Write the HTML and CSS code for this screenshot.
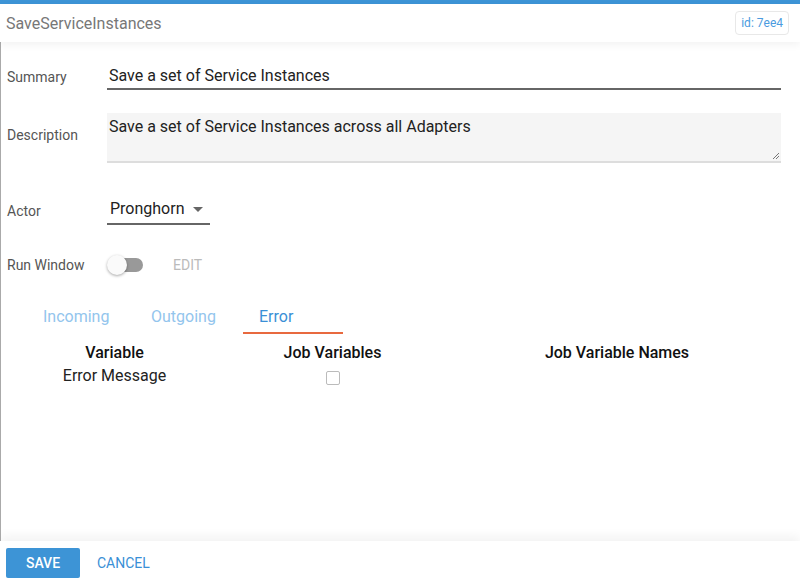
FILE: index.html
```html
<!DOCTYPE html>
<html>
<head>
<meta charset="utf-8">
<link rel="stylesheet" href="styles.css">
</head>
<body>
<div class="page">
  <div class="topbar"></div>
  <header class="header">
    <div class="title">SaveServiceInstances</div>
    <div class="badge">id: 7ee4</div>
  </header>
  <main class="content">
    <div class="row row-summary">
      <label class="label">Summary</label>
      <div class="input">Save a set of Service Instances</div>
    </div>
    <div class="row row-desc">
      <label class="label">Description</label>
      <div class="textarea">Save a set of Service Instances across all Adapters
        <svg class="grip" width="8" height="8" viewBox="0 0 8 8"><path d="M7 1 L1 7 M7 4 L4 7" stroke="#777" stroke-width="1" fill="none"/></svg>
      </div>
    </div>
    <div class="row row-actor">
      <label class="label">Actor</label>
      <div class="select"><span>Pronghorn</span><span class="caret"></span></div>
    </div>
    <div class="row row-run">
      <label class="label">Run Window</label>
      <div class="run-controls">
        <div class="toggle"><div class="track"></div><div class="knob"></div></div>
        <span class="edit">EDIT</span>
      </div>
    </div>
    <nav class="tabs">
      <div class="tab">Incoming</div>
      <div class="tab">Outgoing</div>
      <div class="tab active">Error</div>
    </nav>
    <div class="table">
      <div class="th">Variable</div>
      <div class="th">Job Variables</div>
      <div class="th">Job Variable Names</div>
      <div class="td">Error Message</div>
      <div class="td"><span class="checkbox"></span></div>
      <div class="td"></div>
    </div>
  </main>
  <footer class="footer">
    <button class="btn-save">SAVE</button>
    <button class="btn-cancel">CANCEL</button>
  </footer>
</div>
</body>
</html>
```

FILE: styles.css
```css
* { box-sizing: border-box; }
html, body { margin: 0; padding: 0; }
body {
  font-family: Roboto, "Liberation Sans", Arial, sans-serif;
  background: #fff;
  color: #222;
  width: 800px;
  height: 584px;
  overflow: hidden;
}
.page {
  display: flex;
  flex-direction: column;
  height: 584px;
}
.topbar {
  height: 4px;
  background: #3d94d6;
  flex: none;
}
.header {
  height: 38px;
  flex: none;
  display: flex;
  align-items: center;
  justify-content: space-between;
  padding: 0 11px 0 6px;
  position: relative;
  z-index: 2;
  background: #fff;
  box-shadow: 0 3px 8px rgba(0,0,0,0.05);
}
.title {
  font-size: 16px;
  color: #777;
}
.badge {
  font-size: 12px;
  color: #4b9be0;
  border: 1px solid #e8e8e8;
  border-radius: 4px;
  height: 24px;
  line-height: 22px;
  padding: 0 5px;
}
.content {
  flex: 1;
  border-left: 1px solid #aaa;
  padding: 21px 19px 0 6px;
  position: relative;
  z-index: 1;
}
.row {
  display: grid;
  grid-template-columns: 100px 1fr;
  align-items: center;
}
.label {
  font-size: 14px;
  color: #555;
}
.input {
  font-size: 16px;
  color: #222;
  height: 27px;
  line-height: 25px;
  padding-left: 2px;
  border-bottom: 2px solid #666;
}
.row-desc { margin-top: 23px; }
.row-desc .label {
  align-self: start;
  margin-top: 14px;
}
.textarea {
  position: relative;
  height: 50px;
  background: #f5f5f5;
  border-bottom: 2px solid #ddd;
  font-size: 16px;
  color: #222;
  padding: 4px 2px;
  line-height: 20px;
}
.grip {
  position: absolute;
  right: 1px;
  bottom: 1px;
}
.row-actor { margin-top: 33px; }
.select {
  justify-self: start;
  display: flex;
  align-items: center;
  width: 103px;
  height: 29px;
  font-size: 16px;
  color: #222;
  padding-left: 3px;
  border-bottom: 2px solid #666;
  padding-bottom: 3px;
}
.caret {
  width: 0;
  height: 0;
  border-left: 5px solid transparent;
  border-right: 5px solid transparent;
  border-top: 5px solid #666;
  margin-left: 8px;
  margin-top: 2px;
}
.row-run { margin-top: 30px; }
.run-controls {
  display: flex;
  align-items: center;
}
.toggle {
  position: relative;
  width: 36px;
  height: 20px;
}
.track {
  position: absolute;
  left: 2px;
  top: 3px;
  width: 34px;
  height: 14px;
  border-radius: 7px;
  background: #999;
}
.knob {
  position: absolute;
  left: 0;
  top: 0;
  width: 20px;
  height: 20px;
  border-radius: 50%;
  background: #fafafa;
  box-shadow: 0 1px 3px rgba(0,0,0,0.35);
}
.edit {
  margin-left: 30px;
  font-size: 14px;
  color: #bbb;
}
.tabs {
  display: flex;
  gap: 8px;
  margin-top: 29px;
  margin-left: 20px;
}
.tab {
  width: 100px;
  height: 30px;
  padding-left: 16px;
  font-size: 16px;
  line-height: 20px;
  color: #93c5ed;
  padding-top: 3px;
}
.tab.active {
  color: #3a8fd6;
  border-bottom: 2px solid #e8693f;
}
.table {
  display: grid;
  grid-template-columns: 217px 219px 350px;
  margin-top: 9px;
  margin-left: -1px;
}
.th {
  text-align: center;
  font-size: 16px;
  font-weight: 500;
  color: #111;
  height: 23px;
  line-height: 20px;
}
.td {
  text-align: center;
  font-size: 16px;
  color: #222;
  height: 24px;
  line-height: 20px;
}
.checkbox {
  display: inline-block;
  width: 14px;
  height: 14px;
  border: 1px solid #bbb;
  border-radius: 2px;
  vertical-align: middle;
  margin-top: 2px;
}
.footer {
  height: 43px;
  flex: none;
  display: flex;
  align-items: center;
  padding: 0 6px;
  background: #fff;
  position: relative;
  z-index: 2;
  box-shadow: 0 -5px 10px rgba(0,0,0,0.05);
}
.btn-save {
  width: 74px;
  height: 30px;
  border: none;
  border-radius: 2px;
  background: #3d94d6;
  color: #fff;
  font-family: inherit;
  font-size: 14px;
  font-weight: 500;
  margin-top: 1px;
}
.btn-cancel {
  border: none;
  background: transparent;
  color: #3a8fd6;
  font-family: inherit;
  font-size: 14px;
  margin-left: 11px;
  padding: 0 6px;
}
```
